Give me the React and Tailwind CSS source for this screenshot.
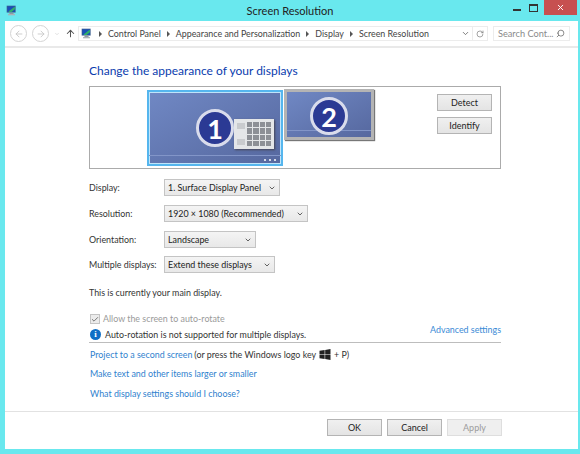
import React from "react";
import { ChevronDown, ArrowLeft, ArrowRight, ArrowUp, RotateCw, Search, X, Check } from "lucide-react";

const font = { fontFamily: 'Lato, "Noto Sans", sans-serif' };

const PcIcon = ({ className }) => (
  <svg viewBox="0 0 16 16" className={className}>
    <rect x="1" y="1" width="13" height="10" fill="#3a5f8f" />
    <rect x="2" y="2" width="11" height="8" fill="#1a4fb8" />
    <path d="M4 9 L12 3 L13 3 L13 6 L8 10 L4 10 Z" fill="#2fae6a" />
    <rect x="5" y="11" width="6" height="2" fill="#8a949c" />
    <rect x="3" y="13" width="10" height="2" fill="#aab2b8" />
  </svg>
);

const NavCircle = ({ children }) => (
  <div className="w-[17px] h-[17px] rounded-full border border-[#d4d4d4] flex items-center justify-center text-[#c4c4c4]">
    {children}
  </div>
);

const Crumb = ({ children }) => (
  <>
    <span className="w-0 h-0 border-y-[3px] border-y-transparent border-l-[3px] border-l-[#555] mx-[6px]" />
    <span>{children}</span>
  </>
);

const Btn = ({ children, disabled }) => (
  <button
    className={
      "w-[55px] h-[17px] border text-[9px] leading-none flex items-center justify-center " +
      (disabled
        ? "bg-[#efefef] border-[#dedede] text-[#9c9c9c]"
        : "bg-gradient-to-b from-[#f0f0f0] to-[#e4e4e4] border-[#b4b4b4] text-[#222]")
    }
  >
    {children}
  </button>
);

const SelectRow = ({ label, value, width, className }) => (
  <div className={"flex items-center h-[17px] " + className}>
    <div className="w-[75px] text-[#333] whitespace-nowrap">{label}</div>
    <div
      className={
        "h-[17px] border border-[#c4c4c4] bg-gradient-to-b from-[#f4f4f4] to-[#e8e8e8] flex items-center justify-between pl-[3px] pr-[3px] text-[#222] whitespace-nowrap " +
        width
      }
    >
      <span>{value}</span>
      <ChevronDown size={8} strokeWidth={2.5} className="text-[#444]" />
    </div>
  </div>
);

const NumBadge = ({ n, className }) => (
  <div
    className={
      "w-[38px] h-[38px] rounded-full bg-[#2b3a94] border-[3px] border-[#d9dcec] flex items-center justify-center text-white text-[27px] font-bold leading-none shrink-0 relative z-10 " +
      className
    }
  >
    {n}
  </div>
);

export default function App() {
  return (
    <div className="w-[580px] h-[454px] bg-[#69e8ee] flex flex-col overflow-hidden" style={font}>
      {/* title bar */}
      <div className="h-[21px] grid grid-cols-[1fr_auto_1fr] shrink-0">
        <PcIcon className="w-[11px] h-[11px] ml-[6px] mt-[5px]" />
        <div className="text-center text-[11px] leading-[22px] text-[#222]">Screen Resolution</div>
        <div className="flex items-start justify-end">
          <div className="w-[8px] h-[2px] bg-[#333] mt-[9px] mr-[8px]" />
          <div className="w-[9px] h-[8px] border border-t-2 border-[#333] mt-[4px] mr-[6px]" />
          <div className="w-[33px] h-[15px] bg-[#c75050] flex items-center justify-center mr-[3px]">
            <X size={9} strokeWidth={2.5} className="text-white" />
          </div>
        </div>
      </div>

      {/* window */}
      <div className="ml-[5px] w-[573px] h-[428px] bg-white flex flex-col shrink-0">
        {/* nav toolbar */}
        <div className="h-[27px] border-b-2 border-[#e9e9e9] flex items-center pl-[5px] shrink-0">
          <NavCircle><ArrowLeft size={10} strokeWidth={2} /></NavCircle>
          <div className="ml-[5px]"><NavCircle><ArrowRight size={10} strokeWidth={2} /></NavCircle></div>
          <ChevronDown size={6} className="text-[#c4c4c4] ml-[5px]" />
          <ArrowUp size={11} strokeWidth={2.2} className="text-[#555] ml-[5px]" />
          <div className="ml-[2px] w-[410px] h-[15px] border border-[#ececec] flex items-center text-[8.9px] text-[#444] whitespace-nowrap">
            <PcIcon className="w-[11px] h-[11px] ml-[2px] mr-[1px]" />
            <Crumb>Control Panel</Crumb>
            <Crumb>Appearance and Personalization</Crumb>
            <Crumb>Display</Crumb>
            <Crumb>Screen Resolution</Crumb>
            <div className="ml-auto flex items-center h-full">
              <ChevronDown size={9} strokeWidth={2} className="text-[#555] mr-[2px]" />
              <div className="h-full w-[15px] border-l border-[#ececec] flex items-center justify-center">
                <RotateCw size={8} className="text-[#777]" />
              </div>
            </div>
          </div>
          <div className="ml-[5px] w-[77px] h-[15px] border border-[#ececec] flex items-center justify-between px-[4px] text-[9.2px] text-[#8a8a8a] whitespace-nowrap">
            <span>Search Cont...</span>
            <Search size={9} className="text-[#666] -scale-x-100" />
          </div>
        </div>

        {/* content */}
        <div className="flex-1 pl-[84px] w-[496px] flex flex-col text-[8.9px]">
          <h1 className="text-[12px] leading-[18px] text-[#0a3cae] mt-[14px] whitespace-nowrap">Change the appearance of your displays</h1>

          {/* monitor preview */}
          <div className="mt-[6px] h-[83px] border border-[#ababab] flex items-start pl-[57px] pt-[3px]">
            <div className="w-[136px] h-[76px] border-2 border-[#55b6ee] bg-gradient-to-br from-[#7088c4] to-[#56689f] flex flex-col shadow-[inset_0_0_0_1px_#bfe4fa]">
              <div className="flex-1 flex items-start justify-end pr-[7px]">
                <NumBadge n="1" className="mt-[17px]" />
                <div className="w-[40px] h-[30px] bg-[#e4e6e8] shadow-[1px_1px_2px_#445] grid grid-cols-[8px_1fr] gap-[2px] p-[3px] mt-[27px]">
                  <div className="flex flex-col justify-between py-[1px]">
                    <div className="h-[6px] bg-[#c9cbce]" />
                    <div className="h-[6px] bg-[#c9cbce]" />
                  </div>
                  <div className="grid grid-cols-4 gap-[1px]">
                    {Array.from({ length: 16 }).map((_, i) => (
                      <div key={i} className="bg-[#8d9096]" />
                    ))}
                  </div>
                </div>
              </div>
              <div className="h-[9px] border-t border-[#8295c8] flex items-center justify-end gap-[3px] pr-[5px]">
                <div className="w-[2px] h-[2px] bg-white rounded-full" />
                <div className="w-[2px] h-[2px] bg-white rounded-full" />
                <div className="w-[2px] h-[2px] bg-white rounded-full" />
              </div>
            </div>
            <div className="ml-[1px] -mt-[1px] w-[90px] h-[51px] border-[3px] border-[#b4b4b4] bg-gradient-to-br from-[#7088c4] to-[#56689f] flex flex-col shadow-[1px_1px_1px_#777]">
              <div className="h-[38px] flex justify-center shrink-0">
                <NumBadge n="2" className="mt-[5px]" />
              </div>
              <div className="w-full h-px bg-[#8295c8]" />
            </div>
            <div className="ml-[63px] mt-[4px] flex flex-col gap-[6px]">
              <Btn>Detect</Btn>
              <Btn>Identify</Btn>
            </div>
          </div>

          {/* selects */}
          <SelectRow className="mt-[10px]" label="Display:" value="1. Surface Display Panel" width="w-[116px]" />
          <SelectRow className="mt-[9px]" label="Resolution:" value="1920 × 1080 (Recommended)" width="w-[144px]" />
          <SelectRow className="mt-[9px]" label="Orientation:" value="Landscape" width="w-[92px]" />
          <SelectRow className="mt-[8px]" label="Multiple displays:" value="Extend these displays" width="w-[111px]" />

          <div className="mt-[12px] leading-[15px] text-[#333]">This is currently your main display.</div>

          <div className="mt-[13px] flex items-center h-[12px] text-[#9a9a9a]">
            <div className="w-[10px] h-[10px] ml-px border border-[#c4c4c4] bg-[#ececec] flex items-center justify-center">
              <Check size={9} strokeWidth={3} className="text-[#777]" />
            </div>
            <span className="ml-[3px]">Allow the screen to auto-rotate</span>
          </div>

          <div className="mt-[2px] h-[15px] flex items-center text-[#333] whitespace-nowrap">
            <div className="w-[11px] h-[11px] ml-px rounded-full bg-[#0f6fc6] text-white text-[9px] font-bold leading-none flex items-center justify-center" style={{ fontFamily: '"Liberation Serif", serif' }}>
              i
            </div>
            <span className="ml-[4px]">Auto-rotation is not supported for multiple displays.</span>
            <span className="ml-auto self-start -mt-[2px] leading-[10px] text-[#3a8ad6]">Advanced settings</span>
          </div>

          <div className="h-px bg-[#bdbdbd]" />

          <div className="mt-[4px] h-[15px] flex items-center whitespace-nowrap text-[#333]">
            <span className="text-[#2f7fce] ml-px">Project to a second screen</span>
            <span className="ml-[2px]">(or press the Windows logo key</span>
            <svg viewBox="0 0 12 12" className="w-[12px] h-[11px] mx-[3px]" fill="#222">
              <path d="M0 2 L5.6 1.2 V5.8 H0 Z M6.2 1.1 L12 0 V5.8 H6.2 Z M0 6.3 H5.6 V10.8 L0 10 Z M6.2 6.3 H12 V12 L6.2 10.9 Z" />
            </svg>
            <span>+ P)</span>
          </div>
          <div className="mt-[4px] h-[15px] leading-[15px] text-[#2f7fce] ml-px">Make text and other items larger or smaller</div>
          <div className="mt-[5px] h-[15px] leading-[15px] text-[#2f7fce] ml-px">What display settings should I choose?</div>
        </div>

        {/* footer */}
        <div className="h-[38px] border-t border-[#e2e2e2] flex items-start justify-end gap-[5px] pt-[7px] pr-[76px] shrink-0">
          <Btn>OK</Btn>
          <Btn>Cancel</Btn>
          <Btn disabled>Apply</Btn>
        </div>
      </div>
    </div>
  );
}
